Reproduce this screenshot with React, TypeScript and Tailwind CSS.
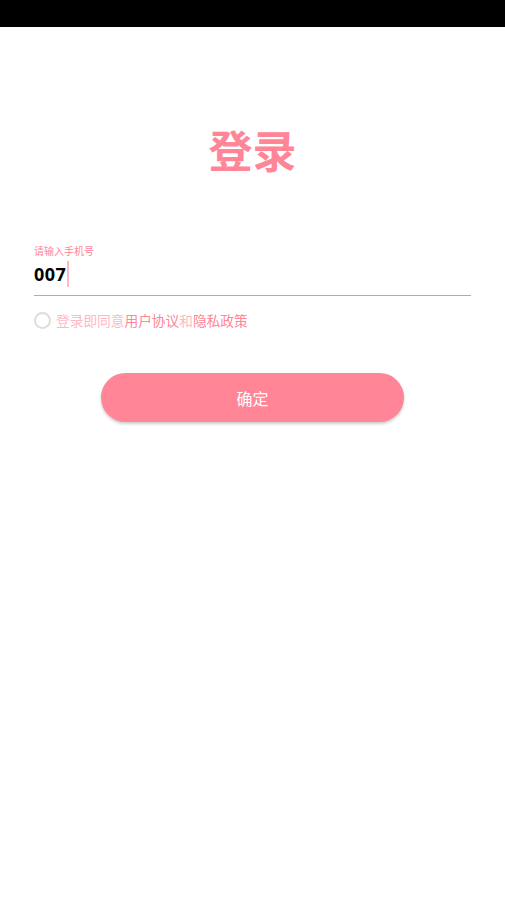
import React from 'react';

export default function App() {
  return (
    <div className="min-h-[897px] w-[505px] bg-white font-['Noto_Sans_CJK_SC',sans-serif]">
      <div className="h-[27px] bg-black" />

      <h1 className="mt-[98px] text-center text-[44px] font-bold leading-[48px] text-[#ff8597]">登录</h1>

      <div className="mx-[34px] mt-[71px]">
        <div className="text-[10px] leading-[14px] text-[#ff8597]">请输入手机号</div>
        <div className="flex h-[38px] items-center border-b border-[#ff8597] pb-[6px]">
          <span className="font-['Noto_Sans',sans-serif] text-[18px] font-bold leading-none tracking-[0.5px] text-black">007</span>
          <span className="ml-[1px] h-[26px] w-[2px] bg-[#ffb8c4]" />
        </div>
        <div className="mt-[7px] flex h-[34px] items-center">
          <span className="h-[17px] w-[17px] rounded-full border-2 border-[#dddddd]" />
          <span className="ml-[5px] text-[13.7px] text-[#ffb8c4]">
            登录即同意<span className="text-[#ff8597]">用户协议</span>和<span className="text-[#ff8597]">隐私政策</span>
          </span>
        </div>
      </div>

      <div className="mt-[36px] flex justify-center">
        <button className="h-[49px] w-[303px] rounded-full bg-[#ff8597] text-[16px] text-white shadow-[0_2px_3px_rgba(0,0,0,0.2)]">
          确定
        </button>
      </div>
    </div>
  );
}
